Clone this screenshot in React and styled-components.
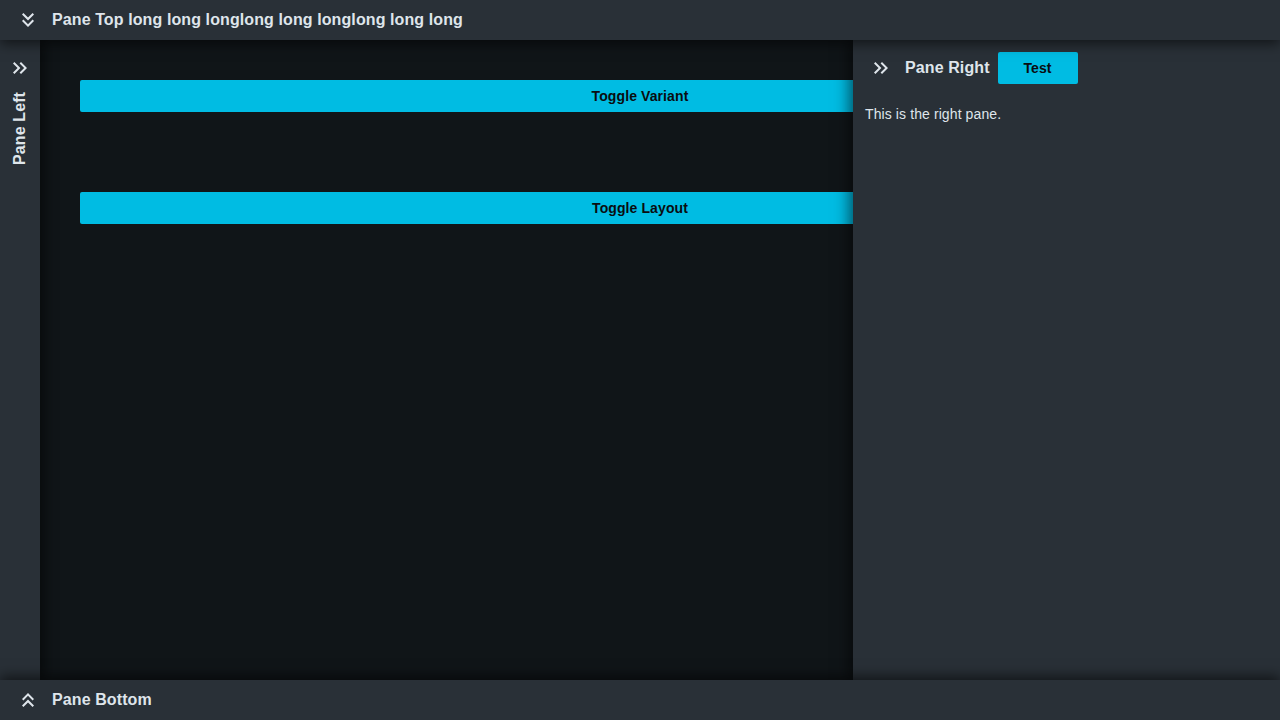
import React from 'react';
import styled, { createGlobalStyle } from 'styled-components';
import {
    MdKeyboardDoubleArrowDown,
    MdKeyboardDoubleArrowRight,
    MdKeyboardDoubleArrowUp,
} from 'react-icons/md';

const GlobalStyle = createGlobalStyle`
    html, body {
        margin: 0;
        padding: 0;
        height: 100%;
        background: #101518;
        font-family: "Liberation Sans", Arial, sans-serif;
        letter-spacing: 0.1px;
    }
    #root {
        height: 100%;
    }
`;

const Shell = styled.div`
    display: grid;
    grid-template-rows: 40px 1fr 40px;
    height: 720px;
    width: 1280px;
    overflow: hidden;
    background: #101518;
    color: #dfe5eb;
`;

const Bar = styled.header`
    position: relative;
    z-index: 3;
    display: flex;
    align-items: center;
    gap: 8px;
    padding: 0 12px;
    background: #293037;
    box-shadow: ${(p) => (p.$bottom ? '0 -4px 12px rgba(0,0,0,0.55)' : '0 4px 12px rgba(0,0,0,0.55)')};
`;

const IconButton = styled.button`
    display: flex;
    align-items: center;
    justify-content: center;
    width: 32px;
    height: 32px;
    padding: 0;
    border: none;
    background: transparent;
    color: #dfe5eb;
    flex-shrink: 0;
    cursor: pointer;
`;

const Title = styled.span`
    font-size: 16px;
    font-weight: 700;
    white-space: nowrap;
    color: #dfe5eb;
`;

const Middle = styled.div`
    position: relative;
    overflow: hidden;
`;

const Main = styled.main`
    display: flex;
    flex-direction: column;
    gap: 80px;
    padding: 40px 80px;
    height: 100%;
    box-sizing: border-box;
`;

const ActionButton = styled.button`
    height: 32px;
    border: none;
    border-radius: 2px;
    background: #00bce3;
    color: #0a0d10;
    font-family: "Liberation Sans", Arial, sans-serif;
    font-size: 14px;
    font-weight: 700;
    letter-spacing: 0.1px;
    cursor: pointer;
    width: ${(p) => (p.$small ? '80px' : '100%')};
    flex-shrink: 0;
`;

const LeftPane = styled.aside`
    position: absolute;
    top: 0;
    bottom: 0;
    left: 0;
    z-index: 2;
    width: 40px;
    display: flex;
    flex-direction: column;
    align-items: center;
    gap: 8px;
    padding-top: 12px;
    box-sizing: border-box;
    background: #293037;
    box-shadow: 4px 0 14px rgba(0,0,0,0.55);
`;

const VerticalTitle = styled(Title)`
    writing-mode: vertical-rl;
    transform: rotate(180deg);
`;

const RightPane = styled.aside`
    position: absolute;
    top: 0;
    bottom: 0;
    right: 0;
    z-index: 2;
    width: 427px;
    padding: 12px;
    box-sizing: border-box;
    background: #293037;
    box-shadow: -4px 0 14px rgba(0,0,0,0.55);
`;

const PaneHeader = styled.div`
    display: flex;
    align-items: center;
    gap: 8px;
`;

const PaneText = styled.p`
    margin: 20px 0 0;
    font-size: 14px;
    line-height: 20px;
    color: #dfe5eb;
`;

export default function App() {
    return (
        <>
            <GlobalStyle />
            <Shell>
                <Bar>
                    <IconButton><MdKeyboardDoubleArrowDown size={24} /></IconButton>
                    <Title>Pane Top long long longlong long longlong long long</Title>
                </Bar>
                <Middle>
                    <Main>
                        <ActionButton>Toggle Variant</ActionButton>
                        <ActionButton>Toggle Layout</ActionButton>
                    </Main>
                    <LeftPane>
                        <IconButton><MdKeyboardDoubleArrowRight size={24} /></IconButton>
                        <VerticalTitle>Pane Left</VerticalTitle>
                    </LeftPane>
                    <RightPane>
                        <PaneHeader>
                            <IconButton><MdKeyboardDoubleArrowRight size={24} /></IconButton>
                            <Title>Pane Right</Title>
                            <ActionButton $small>Test</ActionButton>
                        </PaneHeader>
                        <PaneText>This is the right pane.</PaneText>
                    </RightPane>
                </Middle>
                <Bar $bottom>
                    <IconButton><MdKeyboardDoubleArrowUp size={24} /></IconButton>
                    <Title>Pane Bottom</Title>
                </Bar>
            </Shell>
        </>
    );
}
